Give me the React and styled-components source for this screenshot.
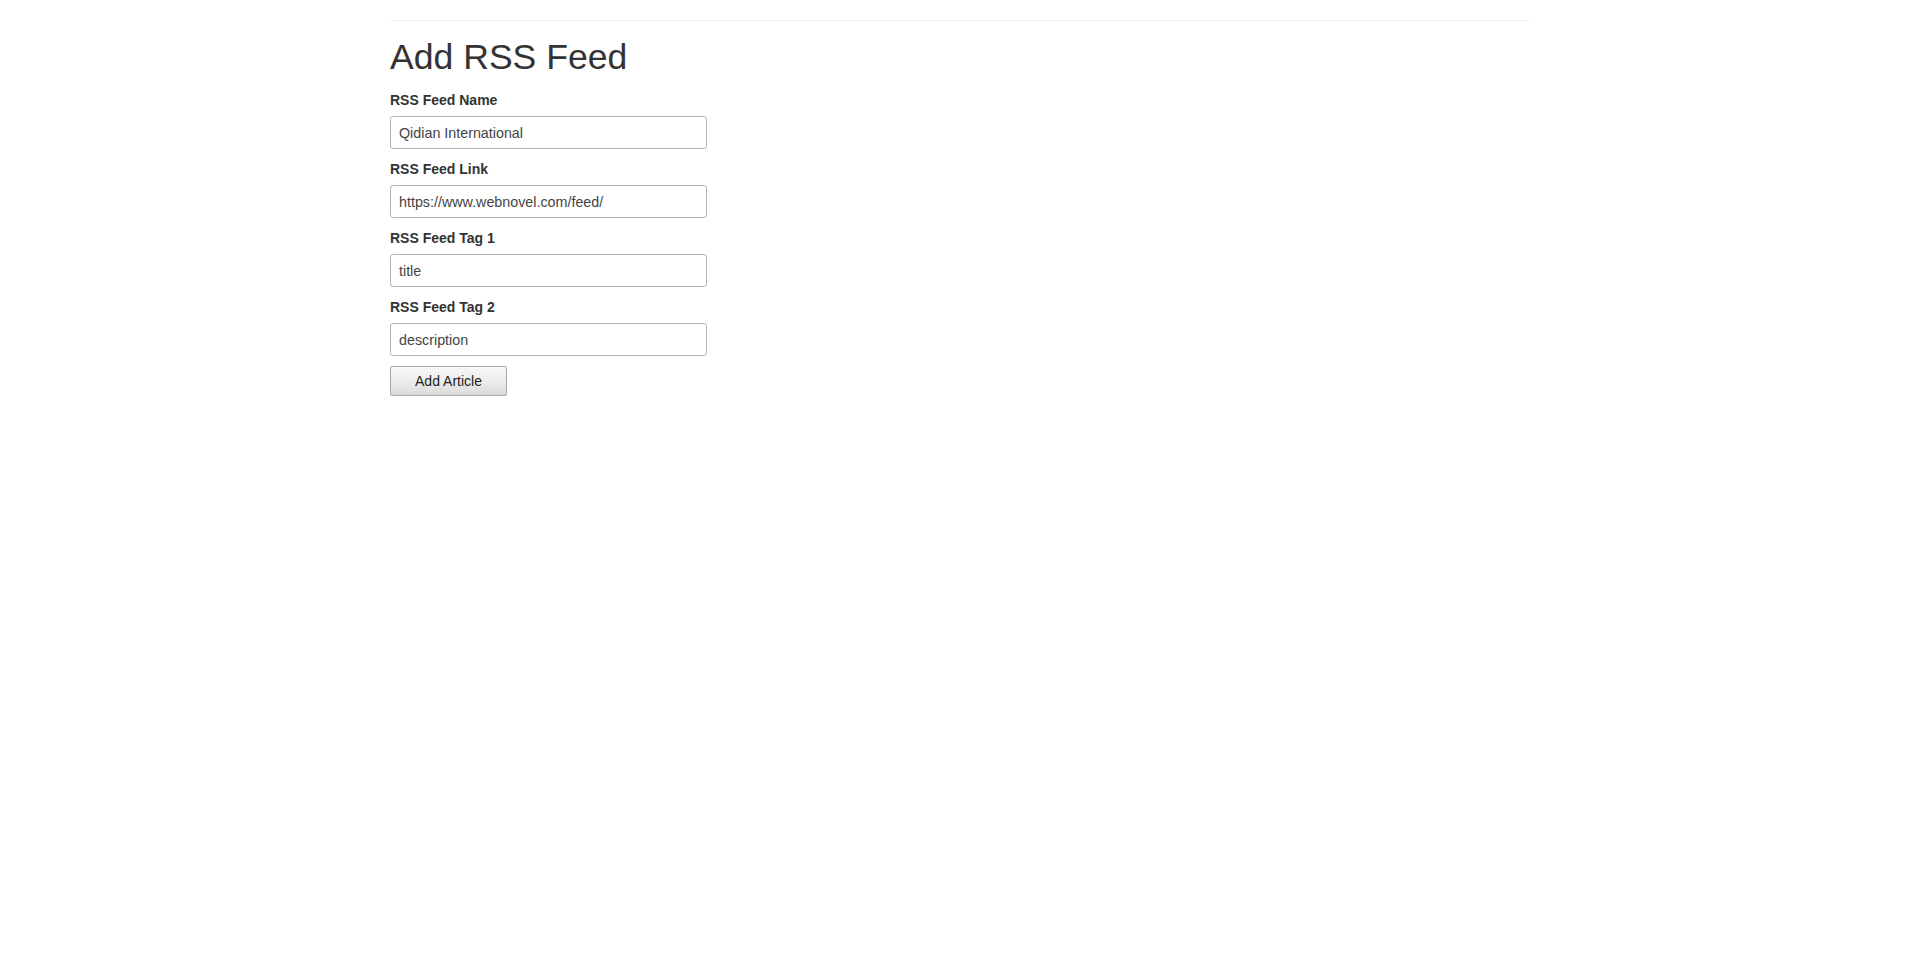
import React from "react";
import styled, { createGlobalStyle } from "styled-components";

const textColor = "#333";
const lineColor = "#eee";

const GlobalStyle = createGlobalStyle`
    html, body {
        margin: 0;
        padding: 0;
        background: #fff;
    }
    body {
        font-family: "Liberation Sans", Arial, Helvetica, sans-serif;
        font-size: 14px;
        line-height: 20px;
        color: ${textColor};
    }
`;

const Container = styled.div`
    width: 1140px;
    margin: 0 auto;
    padding-top: 20px;
`;

const HLine = styled.hr`
    margin: 0 0 16px;
    border: none;
    border-top: 1px solid ${lineColor};
    height: 0;
`;

const Title = styled.h1`
    margin: 0 0 13px;
    font-size: 35.6px;
    line-height: 40px;
    font-weight: normal;
    color: ${textColor};
`;

const Form = styled.form`
    display: flex;
    flex-direction: column;
    align-items: flex-start;
`;

const Field = styled.div`
    display: flex;
    flex-direction: column;
    align-items: flex-start;
    margin-bottom: 10px;
`;

const Label = styled.label`
    font-size: 14px;
    font-weight: bold;
    line-height: 20px;
    margin-bottom: 6px;
    color: ${textColor};
`;

const Input = styled.input`
    box-sizing: border-box;
    width: 317px;
    height: 33px;
    padding: 0 8px;
    border: 1px solid #b5b5b5;
    border-radius: 3px;
    font-family: "Liberation Sans", Arial, sans-serif;
    font-size: 14.3px;
    color: #444;
    background: #fff;
    outline: none;
`;

const Button = styled.button`
    box-sizing: border-box;
    width: 117px;
    height: 30px;
    padding: 0;
    border: 1px solid #a8a8a8;
    border-radius: 2px;
    background: linear-gradient(to bottom, #f7f7f7 0%, #ededed 50%, #dadada 100%);
    font-family: "Liberation Sans", Arial, sans-serif;
    font-size: 14px;
    color: #222;
    cursor: pointer;
`;

const fields = [
  { id: "name", label: "RSS Feed Name", value: "Qidian International" },
  { id: "link", label: "RSS Feed Link", value: "https://www.webnovel.com/feed/" },
  { id: "tag1", label: "RSS Feed Tag 1", value: "title" },
  { id: "tag2", label: "RSS Feed Tag 2", value: "description" },
];

export default function App() {
  return (
    <>
      <GlobalStyle />
      <Container>
        <HLine />
        <Title>Add RSS Feed</Title>
        <Form onSubmit={(e) => e.preventDefault()}>
          {fields.map((f) => (
            <Field key={f.id}>
              <Label htmlFor={f.id}>{f.label}</Label>
              <Input id={f.id} type="text" defaultValue={f.value} />
            </Field>
          ))}
          <Button type="submit">Add Article</Button>
        </Form>
      </Container>
    </>
  );
}
